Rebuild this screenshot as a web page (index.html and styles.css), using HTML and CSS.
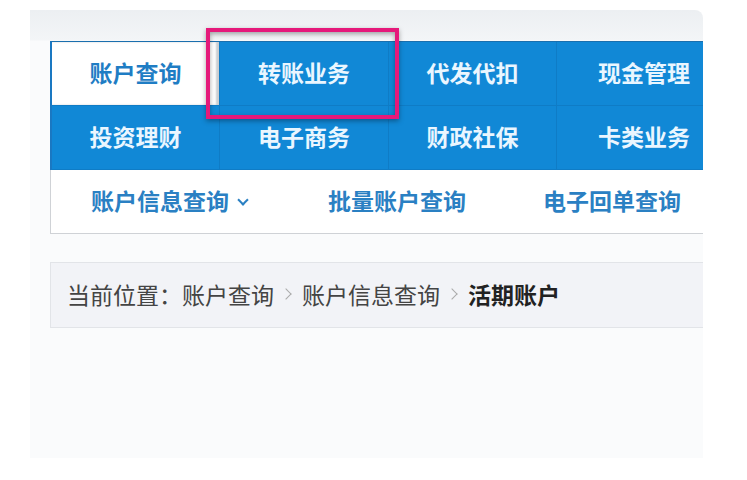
FILE: index.html
```html
<!DOCTYPE html>
<html lang="zh-CN">

<head>
    <meta charset="UTF-8" />
    <title>账户查询</title>
    <link rel="stylesheet" href="styles.css">
</head>

<body>
    <div class="panel">
        <div class="main">
            <div class="tabs">
                <a class="tab active">账户查询</a>
                <a class="tab">转账业务</a>
                <a class="tab">代发代扣</a>
                <a class="tab">现金管理</a>
                <a class="tab">投资理财</a>
                <a class="tab">电子商务</a>
                <a class="tab">财政社保</a>
                <a class="tab">卡类业务</a>
            </div>

            <div class="subnav">
                <a class="sub">账户信息查询<span class="caret"></span></a>
                <a class="sub">批量账户查询</a>
                <a class="sub">电子回单查询</a>
            </div>

            <div class="crumbs">
                <span>当前位置：账户查询</span>
                <i class="sep"></i>
                <span>账户信息查询</span>
                <i class="sep"></i>
                <b>活期账户</b>
            </div>
        </div>

        <!-- highlight frame round the second tab -->
        <div class="mark"></div>
    </div>
</body>

</html>
```

FILE: styles.css
```css
/* Page */
body {
    margin: 0;
    background: #fff;
    font-family: "Noto Sans CJK SC", "Noto Sans", sans-serif;
}

/* Grey card that holds the menu */
.panel {
    position: relative;
    margin: 10px 0 0 30px;
    width: 673px;
    height: 448px;
    padding: 31px 0 0 20px;
    box-sizing: border-box;
    background: linear-gradient(to bottom, #eceff2 0, #f3f5f7 30px, #fafbfc 31px);
    border-top-right-radius: 8px;
    overflow: hidden;
}

.main {
    width: 680px;
}

/* Blue tab grid */
.tabs {
    display: grid;
    grid-template-columns: 168px 169px 168px 175px;
    grid-auto-rows: 64px;
    background: #1188d6;
    border-top: 1px solid #1a6fae;
    border-left: 2px solid #1a78c2;
    box-sizing: border-box;
}

.tab {
    display: flex;
    align-items: center;
    justify-content: center;
    padding-bottom: 3px;
    color: #eaf6ff;
    font-size: 23px;
    font-weight: 700;
    border-right: 1px solid #0f7cc6;
    border-bottom: 1px solid #0f7cc6;
    cursor: pointer;
}

.tab.active {
    background: #fff;
    color: #1f7dc4;
    box-shadow: inset -3px 0 2px #c9cdd1;
}

/* Second-level links */
.subnav {
    display: flex;
    align-items: center;
    gap: 77px;
    height: 64px;
    padding: 0 0 3px 40px;
    background: #fff;
    border-left: 1px solid #cfd2d6;
    border-bottom: 1px solid #cfd2d6;
    box-sizing: border-box;
}

.sub {
    color: #2a80c3;
    font-size: 23px;
    font-weight: 700;
    cursor: pointer;
}

.caret {
    display: inline-block;
    width: 6px;
    height: 6px;
    margin: 0 4px 8px 10px;
    border-right: 2px solid #2a80c3;
    border-bottom: 2px solid #2a80c3;
    transform: rotate(45deg);
    vertical-align: middle;
}

/* Breadcrumb bar */
.crumbs {
    display: flex;
    align-items: center;
    gap: 10px;
    height: 66px;
    margin-top: 28px;
    padding: 0 0 3px 16px;
    background: #f2f3f7;
    border: 1px solid #e2e4e8;
    color: #444;
    font-size: 23px;
    box-sizing: border-box;
}

.crumbs .sep {
    width: 7px;
    height: 7px;
    margin: 0 2px 0 -2px;
    border-top: 1.5px solid #aaa;
    border-right: 1.5px solid #aaa;
    transform: rotate(45deg);
}

.crumbs b {
    color: #222;
}

/* Pink frame drawn over the tabs */
.mark {
    position: absolute;
    left: 176px;
    top: 18px;
    width: 193px;
    height: 91px;
    border: 4px solid #e5197a;
    box-sizing: border-box;
    box-shadow: 0 2px 5px rgba(0, 0, 0, 0.35), inset 0 2px 5px rgba(0, 0, 0, 0.35);
}
```
